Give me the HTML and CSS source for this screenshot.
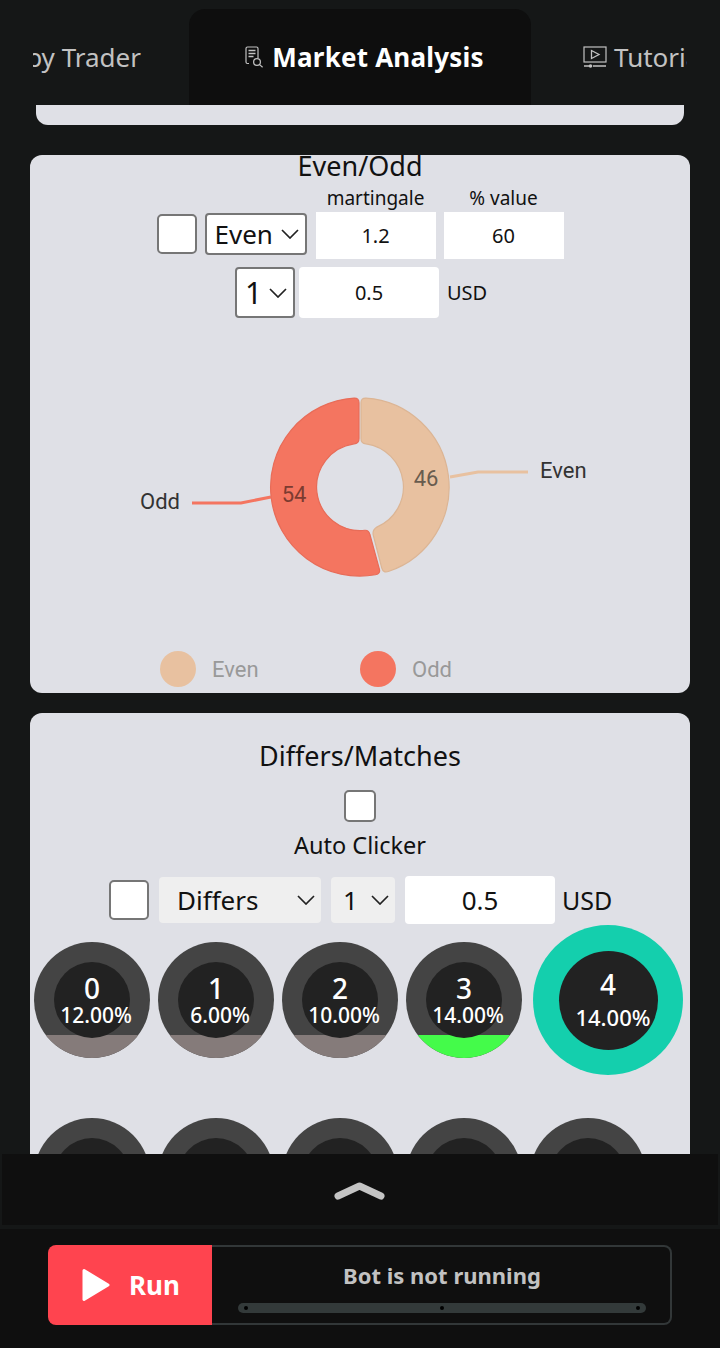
FILE: index.html
```html
<!DOCTYPE html>
<html>
  <head>
    <meta charset="utf-8" />
    <meta name="viewport" content="width=device-width, initial-scale=1" />
    <title>Market Analysis</title>
    <link rel="stylesheet" href="styles.css">
  </head>
  <body>
    <div class="page">
      <nav class="tabs">
        <div class="tab tab-left">Copy Trader</div>
        <div class="tab tab-active">
          <svg class="tab-icon" width="20" height="22" viewBox="0 0 20 22" fill="none" stroke="currentColor" stroke-width="1.2">
            <path d="M4 17.5H2.5A1.5 1.5 0 0 1 1 16V2.5A1.5 1.5 0 0 1 2.5 1h9A1.5 1.5 0 0 1 13 2.5V12" />
            <path d="M3.5 4.5h7M3.5 7.5h7M3.5 10.5h5" stroke-width="1.4" />
            <circle cx="12" cy="16" r="3.4" />
            <path d="M14.6 18.6l3 2.6" />
          </svg>
          <span>Market Analysis</span>
        </div>
        <div class="tab tab-right">
          <svg class="tab-icon" width="24" height="22" viewBox="0 0 24 22" fill="none" stroke="currentColor" stroke-width="1.2">
            <rect x="1" y="1" width="22" height="15" />
            <path d="M8.5 4.5l7.5 4-7.5 4z" stroke-width="1.3" />
            <path d="M1 20h5M10 20h13" stroke-width="1.6" />
            <circle cx="7.5" cy="20" r="1.8" fill="currentColor" stroke="none" />
          </svg>
          <span>Tutorials</span>
        </div>
      </nav>

      <main class="content">
        <div class="card-stub"></div>

        <section class="card card-even">
          <h2 class="even-title">Even/Odd</h2>
          <div class="even-row">
            <input class="check" type="checkbox" />
            <select class="pick pick-even"><option>Even</option><option>Odd</option></select>
            <label class="field field-first">martingale<input class="num" type="text" value="1.2" /></label>
            <label class="field">% value<input class="num" type="text" value="60" /></label>
          </div>
          <div class="stake-row">
            <select class="pick pick-one"><option>1</option></select>
            <input class="num stake" type="text" value="0.5" />
            <span class="usd">USD</span>
          </div>

          <svg class="donut" width="660" height="330" viewBox="0 0 660 330">
            <path class="link" stroke="#e8c1a0" d="M420 159L448 154H498" />
            <path class="link" stroke="#f47560" d="M241 179L211 185H162" />
            <g transform="translate(330 169) scale(0.99)" stroke-width="1.2">
              <path fill="#e8c1a0" stroke="#dcb594" d="M1 -85Q1 -90 6 -89.8A90 90 0 0 1 29.3 85.1Q23.5 87.5 22 82L13.5 49Q12 44 17 40.5A44 44 0 0 0 6 -43.6Q1 -44 1 -49Z" />
              <path fill="#f47560" stroke="#e86c58" d="M-1 -85Q-1 -90 -6 -89.8A90 90 0 1 0 15.6 88.6Q21 87.5 19.5 82.7L10 48Q9 43.5 5 43.7A44 44 0 0 1 -6 -43.6Q-1 -44 -1 -49Z" />
            </g>
            <text class="slice-num num-even" x="396" y="160">46</text>
            <text class="slice-num num-odd" x="264" y="176">54</text>
            <text class="slice-name" x="510" y="152">Even</text>
            <text class="slice-name" x="110" y="183">Odd</text>
          </svg>

          <div class="legend">
            <div class="legend-item"><i class="dot dot-even"></i>Even</div>
            <div class="legend-item"><i class="dot dot-odd"></i>Odd</div>
          </div>
        </section>

        <section class="card card-digits">
          <h2 class="digits-title">Differs/Matches</h2>
          <input class="check check-small" type="checkbox" />
          <div class="auto-label">Auto Clicker</div>
          <div class="digits-row">
            <input class="check" type="checkbox" />
            <select class="pick plain pick-differs"><option>Differs</option><option>Matches</option></select>
            <select class="pick plain pick-ticks"><option>1</option></select>
            <input class="num digits-stake" type="text" value="0.5" />
            <span class="usd usd-big">USD</span>
          </div>

          <div class="digit-grid">
            <div class="digit band"><div class="digit-inner"><b>0</b><span>12.00%</span></div></div>
            <div class="digit band"><div class="digit-inner"><b>1</b><span>6.00%</span></div></div>
            <div class="digit band"><div class="digit-inner"><b>2</b><span>10.00%</span></div></div>
            <div class="digit band band-green"><div class="digit-inner"><b>3</b><span>14.00%</span></div></div>
            <div class="digit digit-active"><div class="digit-inner"><b>4</b><span>14.00%</span></div></div>
            <div class="digit"><div class="digit-inner"></div></div>
            <div class="digit"><div class="digit-inner"></div></div>
            <div class="digit"><div class="digit-inner"></div></div>
            <div class="digit"><div class="digit-inner"></div></div>
            <div class="digit"><div class="digit-inner"></div></div>
          </div>
        </section>
      </main>

      <div class="drawer">
        <svg width="52" height="18" viewBox="0 0 52 18" fill="none" stroke="#c4c4c4" stroke-width="7" stroke-linecap="round" stroke-linejoin="round">
          <path d="M4 14L25.500 4L47 14" />
        </svg>
      </div>

      <footer class="footer">
        <button class="run">
          <svg width="30" height="34" viewBox="0 0 30 34"><path fill="#fff" stroke="#fff" stroke-width="3" stroke-linejoin="round" d="M3 2.500L27 17L3 31.500Z" /></svg>
          Run
        </button>
        <div class="status">
          <div class="status-text">Bot is not running</div>
          <div class="progress"><i></i><i></i><i></i></div>
        </div>
      </footer>
    </div>
  </body>
</html>
```

FILE: styles.css
```css
* {
  box-sizing: border-box;
}
body {
  margin: 0;
  background: #151717;
  font-family: "Noto Sans", Roboto, sans-serif;
  color: #111;
}
.page {
  height: 1348px;
  display: flex;
  flex-direction: column;
  overflow: hidden;
}

/* tabs */
.tabs {
  flex: none;
  height: 105px;
  margin: 0 33px;
  padding-top: 9px;
  display: grid;
  grid-template-columns: 156px 342px 156px;
  overflow: hidden;
  font-size: 26px;
  color: #c2c2c2;
}
.tab {
  display: flex;
  align-items: center;
  gap: 7px;
  white-space: nowrap;
}
.tab-left {
  justify-self: end;
  padding-right: 48px;
}
.tab-active {
  justify-content: center;
  padding-left: 9px;
  background: #0e0e0e;
  border-radius: 16px 16px 0 0;
  color: #fff;
  font-weight: 700;
  letter-spacing: 0.2px;
}
.tab-active .tab-icon {
  color: #c2c2c2;
}
.tab-right {
  padding-left: 52px;
}
.tab-icon {
  flex: none;
}

/* scrolling area */
.content {
  flex: 1;
  min-height: 0;
  overflow: hidden;
  padding: 0 30px;
}
.card-stub {
  height: 20px;
  margin: 0 6px 30px;
  background: #dfe0e6;
  border-radius: 0 0 12px 12px;
}
.card {
  background: #dfe0e6;
  border-radius: 12px;
}
.card-even {
  height: 538px;
  margin-bottom: 20px;
  display: flex;
  flex-direction: column;
  align-items: center;
}
.even-title {
  margin: 0;
  height: 32px;
  line-height: 22px;
  font-size: 27px;
  font-weight: 400;
}
.even-row {
  display: flex;
  align-items: flex-end;
  gap: 8px;
}
.check {
  appearance: none;
  margin: 0;
  width: 40px;
  height: 40px;
  background: #fff;
  border: 2px solid #767676;
  border-radius: 5px;
  flex: none;
}
.even-row .check {
  margin-bottom: 5px;
}
.pick {
  appearance: none;
  margin: 0;
  font-family: inherit;
  font-size: 26px;
  color: #111;
  background: #fff url("data:image/svg+xml,%3Csvg xmlns='http://www.w3.org/2000/svg' width='18' height='10' fill='none' stroke='%23222' stroke-width='1.7'%3E%3Cpath d='M1 1l8 8 8-8'/%3E%3C/svg%3E") no-repeat right 6px center;
  border: 2px solid #767676;
  border-radius: 4px;
  padding: 0 0 0 8px;
}
.pick-even {
  width: 102px;
  height: 42px;
  margin-bottom: 4px;
}
.field {
  display: flex;
  flex-direction: column;
  align-items: center;
  gap: 3px;
  font-size: 19px;
  line-height: 22px;
}
.field-first {
  margin-left: 1px;
}
.num {
  width: 120px;
  height: 47px;
  margin: 0;
  border: 0;
  background: #fff;
  text-align: center;
  font-family: inherit;
  font-size: 20px;
  color: #111;
  padding: 0;
}
.stake-row {
  display: flex;
  align-items: center;
  margin-top: 8px;
  gap: 4px;
}
.pick-one {
  width: 60px;
  height: 51px;
  font-size: 30px;
}
.stake {
  width: 140px;
  height: 51px;
  border-radius: 4px;
}
.usd {
  width: 38px;
  margin-left: 4px;
  font-size: 20px;
  white-space: nowrap;
}
.donut {
  flex: none;
  display: block;
}
.link {
  fill: none;
  stroke-width: 3;
}
.slice-num {
  font-family: Roboto, sans-serif;
  font-size: 22px;
  text-anchor: middle;
  dominant-baseline: central;
}
.num-even {
  fill: #685c4e;
}
.num-odd {
  fill: #7c3b30;
}
.slice-name {
  font-family: Roboto, sans-serif;
  font-size: 22px;
  fill: #333;
  dominant-baseline: central;
}
.legend {
  margin-top: 3px;
  width: 100%;
  padding-left: 130px;
  display: flex;
}
.legend-item {
  width: 200px;
  display: flex;
  align-items: center;
  gap: 16px;
  font-family: Roboto, sans-serif;
  font-size: 22px;
  color: #999;
}
.dot {
  width: 36px;
  height: 36px;
  border-radius: 50%;
}
.dot-even {
  background: #e8c1a0;
}
.dot-odd {
  background: #f47560;
}

/* digits */
.card-digits {
  padding: 26px 4px 0;
  display: flex;
  flex-direction: column;
  align-items: center;
}
.digits-title {
  margin: 0;
  font-size: 27px;
  font-weight: 400;
  line-height: 34px;
}
.check-small {
  width: 32px;
  height: 32px;
  margin-top: 17px;
}
.auto-label {
  margin-top: 8px;
  font-size: 23.500px;
  line-height: 30px;
}
.digits-row {
  margin-top: 16px;
  display: flex;
  align-items: center;
  gap: 10px;
}
.plain {
  border: 0;
  background-color: #efefef;
  height: 46px;
  font-size: 26px;
  background-position: right 6px center;
}
.pick-differs {
  width: 162px;
  padding-left: 18px;
}
.pick-ticks {
  width: 64px;
  padding-left: 12px;
}
.digits-stake {
  width: 150px;
  height: 48px;
  border-radius: 4px;
  font-size: 26px;
}
.usd-big {
  width: 49px;
  margin-left: -3px;
  font-size: 25px;
}
.digit-grid {
  width: 100%;
  margin-top: 1px;
  display: flex;
  flex-wrap: wrap;
  align-items: center;
  gap: 43px 8px;
}
.digit {
  position: relative;
  width: 116px;
  height: 116px;
  border-radius: 50%;
  background: #444;
  overflow: hidden;
  display: flex;
  align-items: center;
  justify-content: center;
}
.band::after {
  content: "";
  position: absolute;
  left: 0;
  right: 0;
  bottom: 0;
  height: 23px;
  background: #857b7a;
}
.band-green::after {
  background: #44fb4a;
}
.digit-inner {
  position: relative;
  z-index: 1;
  width: 76px;
  height: 76px;
  border-radius: 50%;
  background: #222;
  color: #fff;
  display: flex;
  flex-direction: column;
  align-items: center;
  justify-content: center;
  white-space: nowrap;
}
.digit-inner b {
  font-size: 28px;
  font-weight: 500;
  line-height: 30px;
}
.digit-inner span {
  font-size: 21px;
  font-weight: 500;
  line-height: 24px;
  margin-left: 8px;
}
.digit-active {
  width: 150px;
  height: 150px;
  margin-left: 3px;
  background: #14cfad;
}
.digit-active .digit-inner {
  width: 99px;
  height: 99px;
  gap: 6px;
  padding-bottom: 3px;
}
.digit-active .digit-inner span {
  font-size: 22px;
  margin-left: 10px;
}

/* bottom bars */
.drawer {
  flex: none;
  height: 71px;
  background: #0f0f0f;
  border: 2px solid #151717;
  border-top: 0;
  border-bottom: 0;
  display: flex;
  justify-content: center;
  padding-top: 28px;
}
.footer {
  flex: none;
  height: 119px;
  margin-top: 4px;
  padding: 16px 48px 0;
  background: #0f0f0f;
  display: flex;
  align-items: flex-start;
}
.run {
  width: 164px;
  height: 80px;
  flex: none;
  border: 0;
  border-radius: 8px 0 0 8px;
  background: #ff444f;
  color: #fff;
  font-family: inherit;
  font-size: 26px;
  font-weight: 700;
  display: flex;
  align-items: center;
  gap: 18px;
  padding: 0 0 0 33px;
}
.status {
  width: 460px;
  height: 80px;
  border: 2px solid #323738;
  border-left: 0;
  border-radius: 0 8px 8px 0;
  padding: 0 24px 0 26px;
}
.status-text {
  margin-top: 13px;
  height: 30px;
  line-height: 30px;
  text-align: center;
  font-size: 22px;
  font-weight: 700;
  color: #c2c2c2;
}
.progress {
  margin-top: 13px;
  height: 10px;
  border-radius: 5px;
  background: #333a3a;
  padding: 0 6px;
  display: flex;
  align-items: center;
  justify-content: space-between;
}
.progress i {
  width: 4px;
  height: 4px;
  border-radius: 50%;
  background: #000;
}
```
